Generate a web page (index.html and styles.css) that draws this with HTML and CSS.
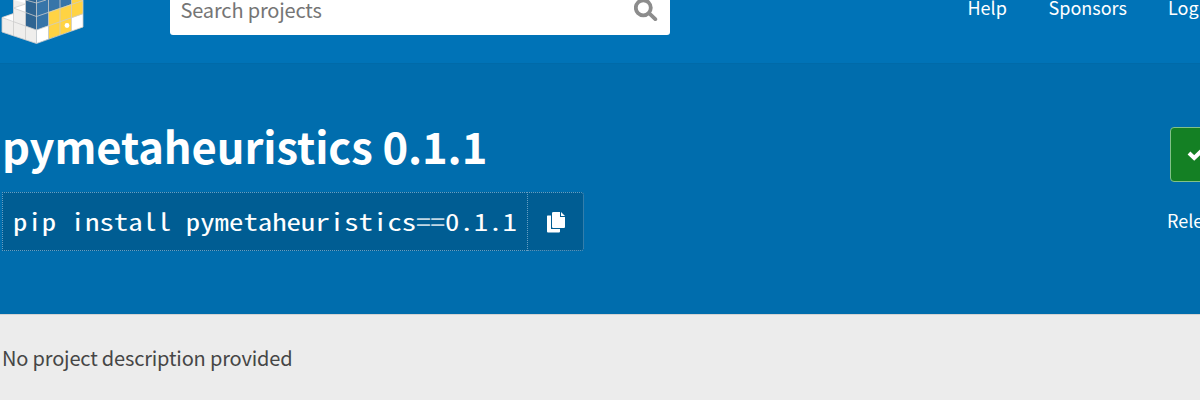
FILE: index.html
```html
<!DOCTYPE html>
<html lang="en">
<head>
<meta charset="utf-8">
<title>pymetaheuristics</title>
<link rel="stylesheet" href="styles.css">
</head>
<body>
<header class="site-header">
  <svg class="logo" width="84" height="44" viewBox="0 0 84 44">
    <path fill="#efeeec" d="M2 17.5 13.5 13.5V0H36.5V43.5L2 32Z"/>
    <path fill="#fff" d="M2 17.5 13.5 13.5V22ZM13.5 8 25.5 4V12ZM14 0H25V3Z"/>
    <path fill="#2f6491" d="M25.5 0H36.5V30L25.5 26Z"/>
    <path fill="#3775a9" d="M36.5 0H71.5V4L48.5 12V25.5L36.5 30Z"/>
    <path fill="#ffd343" d="M48.5 12 71.5 4V0H83V27L48.5 39Z"/>
    <path fill="#fff" d="M36.5 30 48.5 25.5V39L36.5 43.5ZM71.5 18 83 14V27L71.5 31Z"/>
    <path class="logo-lines" d="M2 17.5V32L36.5 43.5 83 27V0M2 17.5 13.5 13.5V0M2 17.5 36.5 30 83 13.7M13.5 8 36.5 16.5 83 .5M13.5 8 25.5 4M13.5 0V36M25.5 0V40M36.5 0V43M48.5 0V39M60 0V35M71.5 0V31M25.5 0 36.5 3 46 0"/>
    <circle cx="67" cy="25.5" r="2.4" fill="#fff"/>
  </svg>
  <div class="search">
    <span>Search projects</span>
    <svg class="search-icon" width="24" height="21" viewBox="0 0 24 21"><circle cx="9.3" cy="7.8" r="7.5"/><path d="m15 13.2 6.3 6"/></svg>
  </div>
  <nav class="nav"><a class="help">Help</a><a class="sponsors">Sponsors</a><a>Log in</a></nav>
</header>
<section class="banner">
  <div class="package">
    <h1>pymetaheuristics 0.1.1</h1>
    <div class="pip">
      <code><span class="command">pip install pymetaheuristics<span class="equals">==</span>0.1.1</span></code>
      <button class="copy" aria-label="Copy"><svg width="20" height="22" viewBox="0 0 20 22"><path d="M1.5 4.5H5V18H14V20.5Q14 21.5 13 21.5H2Q1 21.5 1 20.5V5Z"/><path d="M7.5 1H14V6H19V15.8Q19 17 18 17H7.2Q6 17 6 16V2Q6 1 7.5 1ZM15 1 19 5H15Z"/></svg></button>
    </div>
  </div>
  <div class="status">
    <div class="latest"><svg width="24" height="18" viewBox="0 0 24 18"><path d="m2 8 5.2 5L18 2.5"/></svg>Latest version</div>
    <p>Released: Jul 2022</p>
  </div>
</section>
<main class="content"><p>No project description provided</p></main>
</body>
</html>
```
FILE: styles.css
```css
* { box-sizing: border-box; }
body {
  margin: 0;
  width: 1200px;
  height: 400px;
  overflow: hidden;
  background: #ececec;
  color: #464646;
  font-family: "Noto Sans CJK SC", "Open Sans", sans-serif;
}
h1, p { margin: 0; }
.site-header {
  display: flex;
  align-items: flex-start;
  height: 64px;
  background: #0073b7;
  border-bottom: 1px solid #006aa8;
  color: #fff;
}
.logo { flex: none; }
.logo-lines { fill: none; stroke: #ccc; stroke-width: .8; }
.search {
  display: flex;
  justify-content: space-between;
  width: 500px;
  height: 35px;
  margin-left: 86px;
  padding: 0 12px 0 10.5px;
  border-radius: 0 0 3px 3px;
  background: #fff;
  color: #757575;
  font-size: 20px;
  line-height: 19px;
  letter-spacing: -0.16px;
}
.search-icon { fill: none; stroke: #8c8c8c; stroke-width: 3.8; stroke-linecap: round; }
.nav {
  display: flex;
  flex: 1;
  min-width: 0;
  overflow: hidden;
  padding-left: 297.5px;
  font-size: 18px;
  line-height: 15px;
  height: 30px;
  white-space: nowrap;
}
.nav a { flex: none; }
.help { width: 81px; }
.sponsors { width: 119.5px; }
.banner {
  display: flex;
  justify-content: space-between;
  height: 250px;
  background: #006dad;
  color: #fff;
}
.package { padding: 54px 0 0 2px; }
h1 {
  height: 74px;
  font-size: 43.5px;
  line-height: 56px;
  font-weight: 700;
  letter-spacing: -0.08px;
  white-space: nowrap;
}
.pip { display: flex; width: 582px; height: 59px; }
code {
  width: 525px;
  padding-left: 10px;
  border: 1px dotted #669fc3;
  border-right: 0;
  background: #005d93;
  font-family: "Noto Sans Mono CJK SC", "DejaVu Sans Mono", monospace;
  font-size: 24px;
  line-height: 55px;
  white-space: nowrap;
}
.command {
  display: inline-block;
  transform: scaleX(1.2);
  transform-origin: left center;
}
.equals { opacity: .75; }
.copy {
  width: 57px;
  padding: 0 0 0 1px;
  border: 1px dotted #669fc3;
  border-radius: 0 3px 3px 0;
  background: #005d93;
}
.copy svg { display: block; margin: 0 auto; fill: #fff; }
.status {
  width: 33px;
  padding-top: 63px;
  overflow: hidden;
  white-space: nowrap;
  font-size: 18px;
}
.latest {
  display: flex;
  align-items: center;
  width: 200px;
  height: 55px;
  margin: 0 0 24px 3px;
  padding-left: 16px;
  border: 1px solid #82c188;
  border-radius: 4px;
  background: #148024;
}
.latest svg { flex: none; fill: none; stroke: #fff; stroke-width: 4; margin-top: -2px; }
.status p { line-height: 28px; }
.content {
  height: 86px;
  padding: 28px 0 0 2px;
  border-top: 1px solid #d3d3d3;
  font-size: 20px;
  line-height: 30px;
  letter-spacing: -0.17px;
}
```
